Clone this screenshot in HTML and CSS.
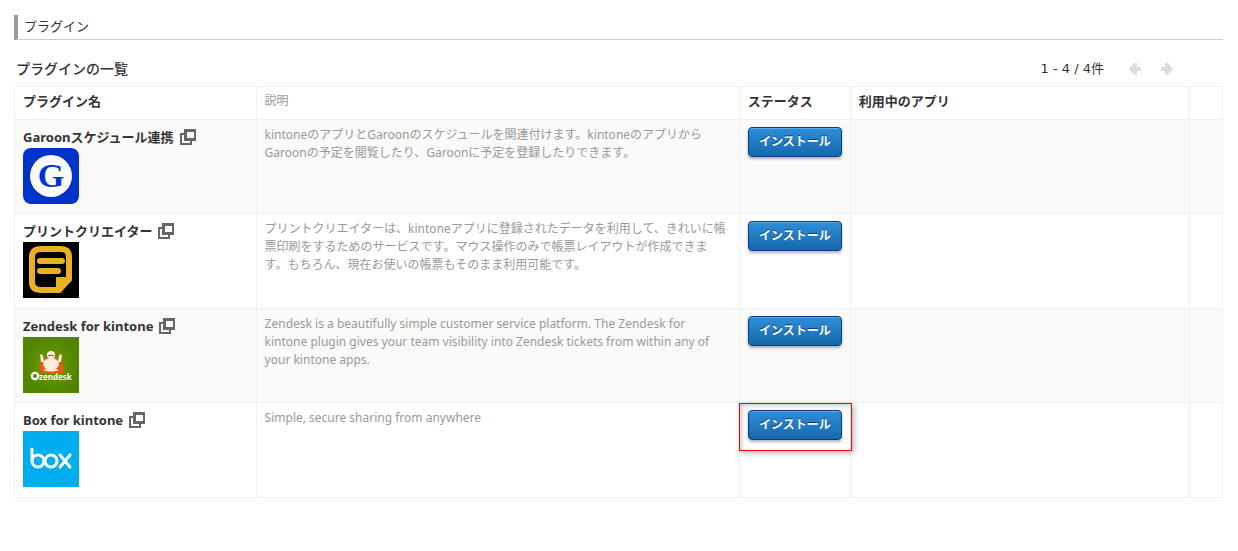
FILE: index.html
```html
<!DOCTYPE html>
<html lang="ja">
<head>
    <meta charset="UTF-8">
    <meta name="viewport" content="width=device-width, initial-scale=1.0">
    <title>プラグイン</title>
    <link rel="stylesheet" href="styles.css">
</head>
<body>
    <h1>プラグイン</h1>

    <main>
        <div class="list-header">
            <h2>プラグインの一覧</h2>
            <div class="pager">
                <span class="pager-count">1 - 4 / 4件</span>
                <button class="pager-btn" aria-label="前へ" disabled>
                    <svg width="12" height="12" viewBox="0 0 12 12"><path d="M0 6L5 0H8V4H12V8H8V12H5Z"/></svg>
                </button>
                <button class="pager-btn" aria-label="次へ" disabled>
                    <svg width="12" height="12" viewBox="0 0 12 12"><path d="M12 6L7 0H4V4H0V8H4V12H7Z"/></svg>
                </button>
            </div>
        </div>

        <table class="plugins">
            <colgroup>
                <col class="col-name">
                <col class="col-desc">
                <col class="col-status">
                <col class="col-apps">
                <col class="col-menu">
            </colgroup>
            <thead>
                <tr>
                    <th>プラグイン名</th>
                    <th class="desc">説明</th>
                    <th>ステータス</th>
                    <th>利用中のアプリ</th>
                    <th></th>
                </tr>
            </thead>
            <tbody>
                <tr>
                    <td>
                        <div class="name">
                            <span>Garoonスケジュール連携</span>
                            <a href="#" aria-label="Garoonスケジュール連携を開く"><svg class="popup" width="16" height="16" viewBox="0 0 16 16"><path d="M4 0H16V12H12V16H0V4H4ZM7 3V9H14V3ZM4 6H2V14H10V12H4Z" fill-rule="evenodd"/></svg></a>
                        </div>
                        <svg class="logo" width="56" height="56" viewBox="0 0 56 56">
                            <rect width="56" height="56" rx="8" fill="#0033cc"/>
                            <circle cx="28" cy="28" r="21" fill="#fafafa"/>
                            <text class="logo-garoon" x="28" y="39" text-anchor="middle">G</text>
                        </svg>
                    </td>
                    <td class="desc">kintoneのアプリとGaroonのスケジュールを関連付けます。kintoneのアプリから<br>Garoonの予定を閲覧したり、Garoonに予定を登録したりできます。</td>
                    <td><button class="install">インストール</button></td>
                    <td></td>
                    <td></td>
                </tr>
                <tr>
                    <td>
                        <div class="name">
                            <span>プリントクリエイター</span>
                            <a href="#" aria-label="プリントクリエイターを開く"><svg class="popup" width="16" height="16" viewBox="0 0 16 16"><path d="M4 0H16V12H12V16H0V4H4ZM7 3V9H14V3ZM4 6H2V14H10V12H4Z" fill-rule="evenodd"/></svg></a>
                        </div>
                        <svg class="logo" width="56" height="56" viewBox="0 0 56 56">
                            <rect width="56" height="56" fill="#000"/>
                            <path d="M46 37V15Q46 7 38 7H18Q9 7 9 15V40Q9 48 18 48H36Z" fill="none" stroke="#e9b024" stroke-width="6" stroke-linejoin="round"/>
                            <path d="M33 35H49V38L37 51H33Z" fill="#e9b024"/>
                            <path d="M17 19H39M17 29H35" stroke="#e9b024" stroke-width="6" stroke-linecap="round"/>
                        </svg>
                    </td>
                    <td class="desc">プリントクリエイターは、kintoneアプリに登録されたデータを利用して、きれいに帳<br>票印刷をするためのサービスです。マウス操作のみで帳票レイアウトが作成できま<br>す。もちろん、現在お使いの帳票もそのまま利用可能です。</td>
                    <td><button class="install">インストール</button></td>
                    <td></td>
                    <td></td>
                </tr>
                <tr>
                    <td>
                        <div class="name">
                            <span>Zendesk for kintone</span>
                            <a href="#" aria-label="Zendesk for kintoneを開く"><svg class="popup" width="16" height="16" viewBox="0 0 16 16"><path d="M4 0H16V12H12V16H0V4H4ZM7 3V9H14V3ZM4 6H2V14H10V12H4Z" fill-rule="evenodd"/></svg></a>
                        </div>
                        <svg class="logo" width="56" height="56" viewBox="0 0 56 56">
                            <defs>
                                <radialGradient id="green"><stop offset="0" stop-color="#6f9c00"/><stop offset="1" stop-color="#4f8500"/></radialGradient>
                            </defs>
                            <rect width="56" height="56" fill="url(#green)"/>
                            <path d="M17 26Q20 20 28 20T39 26L41 33Q41 36 36 36H21Q16 36 16 33Z" fill="#e8590c"/>
                            <path d="M17 18Q19 16 20 19L21 25H18ZM39 18Q37 16 36 19L35 25H38Z" fill="#fbeedd"/>
                            <ellipse cx="28" cy="27" rx="8" ry="6" fill="#fbeedd"/>
                            <path d="M20 33Q28 29 36 33Q28 36 20 33Z" fill="#fbeedd"/>
                            <circle cx="28" cy="18" r="4" fill="#fbeedd"/>
                            <path d="M25 19Q28 17 31 19" fill="none" stroke="#b5452c" stroke-width="1"/>
                            <circle cx="12" cy="39" r="3" fill="none" stroke="#fff" stroke-width="2"/>
                            <circle cx="12" cy="39" r="4" fill="none" stroke="#fff" stroke-width="1" stroke-dasharray="2 2"/>
                            <text class="logo-zendesk" x="16" y="43">zendesk</text>
                        </svg>
                    </td>
                    <td class="desc">Zendesk is a beautifully simple customer service platform. The Zendesk for<br>kintone plugin gives your team visibility into Zendesk tickets from within any of<br>your kintone apps.</td>
                    <td><button class="install">インストール</button></td>
                    <td></td>
                    <td></td>
                </tr>
                <tr>
                    <td>
                        <div class="name">
                            <span>Box for kintone</span>
                            <a href="#" aria-label="Box for kintoneを開く"><svg class="popup" width="16" height="16" viewBox="0 0 16 16"><path d="M4 0H16V12H12V16H0V4H4ZM7 3V9H14V3ZM4 6H2V14H10V12H4Z" fill-rule="evenodd"/></svg></a>
                        </div>
                        <svg class="logo" width="56" height="56" viewBox="0 0 56 56">
                            <rect width="56" height="56" fill="#00aeef"/>
                            <g fill="none" stroke="#fff" stroke-width="3" stroke-linecap="round">
                                <path d="M9 18V30"/>
                                <circle cx="15" cy="30" r="6"/>
                                <circle cx="28" cy="30" r="6"/>
                                <path d="M37 24L47 36M47 24L37 36"/>
                            </g>
                        </svg>
                    </td>
                    <td class="desc">Simple, secure sharing from anywhere</td>
                    <td class="marked"><button class="install">インストール</button></td>
                    <td></td>
                    <td></td>
                </tr>
            </tbody>
        </table>
    </main>
</body>
</html>
```
FILE: styles.css
```css
* {
    box-sizing: border-box;
}

body {
    margin: 0;
    padding: 15px 15px 0 14px;
    background-color: #fff;
    color: #333;
    font-family: "Noto Sans", "Noto Sans CJK JP", sans-serif;
    font-size: 12px;
    line-height: 18px;
}

h1 {
    margin: 0;
    padding: 1px 6px 3px;
    border-left: 4px solid #999;
    border-bottom: 1px solid #ccc;
    font-size: 13px;
    font-weight: normal;
    line-height: 20px;
}

.list-header {
    display: flex;
    justify-content: space-between;
    align-items: center;
    height: 46px;
    padding: 12px 50px 0 2px;
}

h2 {
    margin: 0;
    font-size: 14px;
    font-weight: 500;
}

.pager {
    display: flex;
    align-items: center;
    gap: 20px;
}

.pager-count {
    margin-right: 5px;
    font-family: "DejaVu Sans", "Noto Sans CJK JP", sans-serif;
    font-size: 13px;
}

.pager-btn {
    display: flex;
    padding: 0;
    border: none;
    background: none;
    fill: #ddd;
}

.plugins {
    width: 100%;
    table-layout: fixed;
    border-collapse: collapse;
}

.col-name {
    width: 20%;
}

.col-desc {
    width: 40%;
}

.col-status {
    width: 111px;
}

.col-menu {
    width: 33px;
}

th,
td {
    padding: 6px 8px;
    border: 1px solid #f0f0f0;
    text-align: left;
    vertical-align: top;
}

th {
    padding: 5px 8px 9px;
    font-size: 13px;
    font-weight: bold;
}

tbody tr:nth-child(odd) {
    background-color: #fafaf8;
}

.desc {
    color: #999;
    font-size: 12px;
    font-weight: normal;
}

td:first-child {
    padding: 8px 8px 9px;
}

tr:nth-child(even) td:first-child {
    padding-bottom: 10px;
}

.name {
    display: flex;
    align-items: center;
    gap: 6px;
    height: 18px;
    margin-bottom: 2px;
    font-size: 13px;
    font-weight: bold;
}

.popup {
    display: block;
    fill: #666;
}

.logo {
    display: block;
}

.logo-garoon {
    fill: #0033cc;
    font: bold 34px "Liberation Serif", serif;
}

.logo-zendesk {
    fill: #fff;
    font: bold 8px "Noto Sans", sans-serif;
}

.install {
    display: block;
    width: 94px;
    height: 30px;
    padding: 0 0 2px;
    border: 1px solid #0d3b87;
    border-radius: 4px;
    background: linear-gradient(#2d8fd8, #1568ac);
    box-shadow: 0 2px 3px rgba(0, 0, 0, 0.3), inset 0 1px 0 #5aa9e2;
    color: #fff;
    font-family: inherit;
    font-size: 12px;
    font-weight: bold;
    text-shadow: 0 -1px 0 #0d3b87;
}

td:nth-child(3) {
    padding: 7px 8px;
}

.marked {
    position: relative;
}

/* frame drawn over the cell's own borders */
.marked::after {
    content: "";
    position: absolute;
    top: 0;
    left: -1px;
    right: -2px;
    height: 46px;
    border: 1px solid #f00;
    box-shadow: 2px 2px 6px rgba(0, 0, 0, 0.3), inset 2px 2px 4px rgba(0, 0, 0, 0.2);
    pointer-events: none;
}
```
